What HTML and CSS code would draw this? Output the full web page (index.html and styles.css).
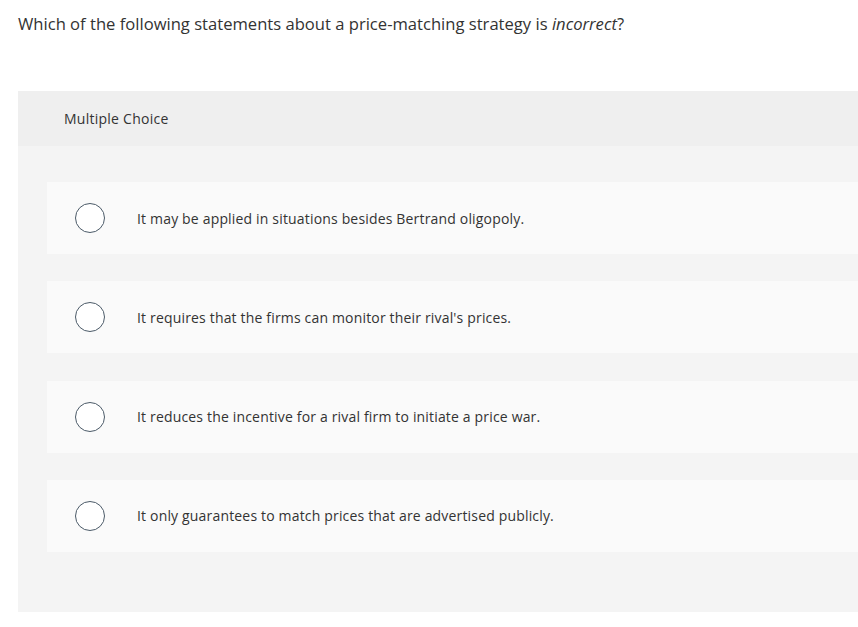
FILE: index.html
```html
<!DOCTYPE html>
<html lang="en">
<head>
<meta charset="utf-8">
<title>Multiple Choice</title>
<link rel="stylesheet" href="styles.css">
</head>
<body>
<p class="question">Which of the following statements about a price-matching strategy is <em>incorrect</em>?</p>
<section class="panel">
  <header class="panel-head">Multiple Choice</header>
  <div class="options">
    <label class="option"><span class="radio"></span><span class="opt-text">It may be applied in situations besides Bertrand oligopoly.</span></label>
    <label class="option"><span class="radio"></span><span class="opt-text">It requires that the firms can monitor their rival's prices.</span></label>
    <label class="option"><span class="radio"></span><span class="opt-text">It reduces the incentive for a rival firm to initiate a price war.</span></label>
    <label class="option"><span class="radio"></span><span class="opt-text">It only guarantees to match prices that are advertised publicly.</span></label>
  </div>
</section>
</body>
</html>
```
FILE: styles.css
```css
html, body {
  margin: 0;
  padding: 0;
  background: #ffffff;
}
body {
  font-family: "Open Sans", "Liberation Sans", sans-serif;
  color: #333333;
}
.question {
  margin: 0;
  padding: 12px 0 0 18px;
  font-size: 16.6px;
  line-height: 23px;
  height: 91px;
  box-sizing: border-box;
}
.question em {
  font-style: italic;
}
.panel {
  margin-left: 18px;
  background: #f4f4f4;
  padding-bottom: 60px;
}
.panel-head {
  height: 55px;
  background: #efefef;
  display: flex;
  align-items: center;
  padding-left: 46px;
  font-size: 14px;
  letter-spacing: 0.25px;
  color: #333;
}
.options {
  display: flex;
  flex-direction: column;
  gap: 27.3px;
  padding: 36px 0 0 29px;
}
.option {
  height: 72px;
  background: #fafafa;
  display: flex;
  align-items: center;
  padding-left: 28px;
  cursor: pointer;
}
.radio {
  width: 28px;
  height: 28px;
  border: 1.5px solid #4b5a68;
  border-radius: 50%;
  background: #fff;
  flex-shrink: 0;
}
.opt-text {
  margin-left: 32px;
  font-size: 14px;
  letter-spacing: 0.17px;
  color: #333;
}
```
